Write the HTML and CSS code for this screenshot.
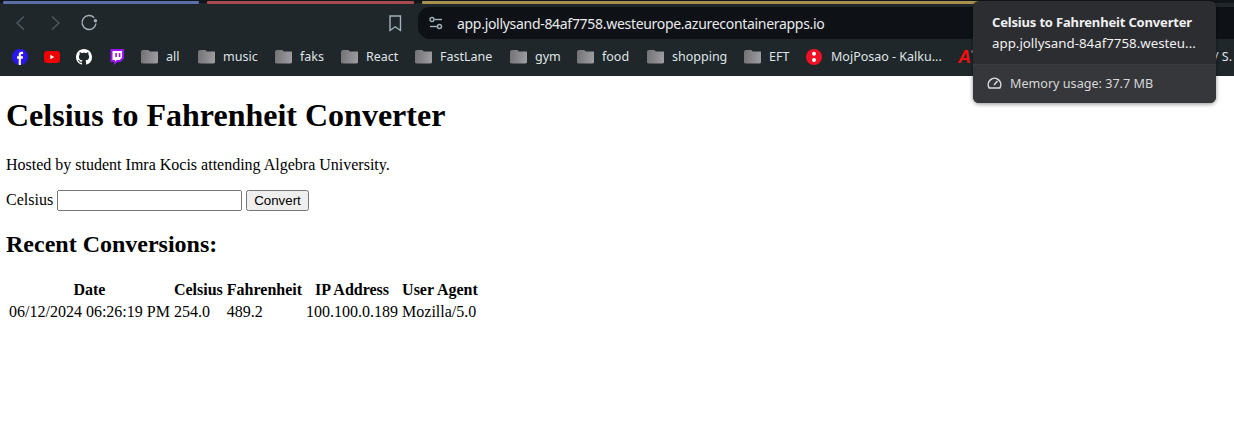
FILE: index.html
```html
<!DOCTYPE html>
<html lang="en">
<head>
    <meta charset="UTF-8">
    <meta name="viewport" content="width=device-width, initial-scale=1.0">
    <title>Celsius to Fahrenheit Converter</title>
    <link rel="stylesheet" href="styles.css">
</head>
<body>
    <div class="browser">
        <div class="tab-strip">
            <div class="tab-line tab-blue"></div>
            <div class="tab-line tab-red"></div>
            <div class="tab-line tab-gold"></div>
        </div>

        <div class="toolbar">
            <button class="tool-btn" aria-label="Back">
                <svg width="16" height="16" viewBox="0 0 16 16"><path d="M11 1.500 4 8l7 6.500" class="stroke-dim"/></svg>
            </button>
            <button class="tool-btn" aria-label="Forward">
                <svg width="16" height="16" viewBox="0 0 16 16"><path d="M5 1.500 12 8l-7 6.500" class="stroke-dim"/></svg>
            </button>
            <button class="tool-btn" aria-label="Reload">
                <svg width="18" height="18" viewBox="0 0 18 18"><path d="M14.200 3.700A7 7 0 1 0 16 9.500" class="stroke-icon"/><circle cx="15.400" cy="6.800" r="1.700" class="fill-icon"/></svg>
            </button>
            <button class="tool-btn tool-bookmark" aria-label="Bookmark">
                <svg width="14" height="17" viewBox="0 0 14 17"><path d="M2 1h10.500v14.500L7.200 11.800 2 15.500z" class="stroke-icon"/></svg>
            </button>
            <div class="address-bar">
                <svg class="tune-icon" width="14" height="14" viewBox="0 0 14 14"><circle cx="3" cy="3.500" r="2" class="stroke-icon"/><path d="M5.500 3.500H13" class="stroke-icon"/><circle cx="10.500" cy="10.500" r="2" class="stroke-icon"/><path d="M1 10.500h7" class="stroke-icon"/></svg>
                <span class="url">app.jollysand-84af7758.westeurope.azurecontainerapps.io</span>
            </div>
        </div>

        <div class="bookmarks">
            <a class="site" aria-label="Facebook">
                <svg width="16" height="16" viewBox="0 0 16 16"><circle cx="8" cy="8" r="8" fill="#2a17f0"/><path d="M6.700 16V9.700H5V7.300h1.700V5.800c0-2 1.100-3 2.900-3 .7 0 1.300.1 1.500.1v2.100h-1c-.9 0-1.200.5-1.200 1.200v1.100h2.200l-.4 2.400H8.900V16z" fill="#fff"/></svg>
            </a>
            <a class="site" aria-label="YouTube">
                <svg width="16" height="12" viewBox="0 0 16 12"><rect width="16" height="12" rx="3" fill="#f00000"/><path d="M6.300 3.800 10.300 6l-4 2.200z" fill="#fff"/></svg>
            </a>
            <a class="site" aria-label="GitHub">
                <svg width="16" height="16" viewBox="0 0 16 16"><path fill="#fff" d="M8 0C3.580 0 0 3.580 0 8c0 3.540 2.290 6.530 5.470 7.590.4.070.55-.17.55-.38 0-.19-.01-.82-.01-1.490-2.010.37-2.530-.49-2.690-.94-.09-.23-.48-.94-.82-1.130-.28-.15-.68-.52-.01-.53.63-.01 1.080.58 1.230.82.72 1.210 1.870.87 2.330.66.070-.52.28-.87.51-1.070-1.780-.2-3.640-.89-3.640-3.950 0-.87.31-1.590.82-2.150-.08-.2-.36-1.020.08-2.120 0 0 .67-.21 2.200.82.64-.18 1.320-.27 2-.27.68 0 1.360.09 2 .27 1.530-1.040 2.200-.82 2.200-.82.44 1.100.16 1.920.08 2.120.51.56.82 1.270.82 2.150 0 3.070-1.870 3.750-3.650 3.950.29.25.54.73.54 1.480 0 1.070-.01 1.930-.01 2.200 0 .21.15.46.55.38A8.013 8.013 0 0016 8c0-4.420-3.580-8-8-8z"/></svg>
            </a>
            <a class="site site-twitch" aria-label="Twitch">
                <svg width="15" height="16" viewBox="0 0 15 16"><path d="M1.500 0H15v9.500L11.500 13H8.500L5 16v-3H1.500z" fill="#9a12f5"/><path d="M3.500 2H13v6.500L10.800 11H7.800L6 12.800V11H3.500z" fill="#fff"/><path d="M6.300 4h1.600v4H6.300zM9.800 4h1.600v4H9.800z" fill="#9a12f5"/></svg>
            </a>

            <a class="folder w-all"><i class="folder-icon"></i>all</a>
            <a class="folder w-music"><i class="folder-icon"></i>music</a>
            <a class="folder w-faks"><i class="folder-icon"></i>faks</a>
            <a class="folder w-react"><i class="folder-icon"></i>React</a>
            <a class="folder w-fastlane"><i class="folder-icon"></i>FastLane</a>
            <a class="folder w-gym"><i class="folder-icon"></i>gym</a>
            <a class="folder w-food"><i class="folder-icon"></i>food</a>
            <a class="folder w-shopping"><i class="folder-icon"></i>shopping</a>
            <a class="folder w-eft"><i class="folder-icon"></i>EFT</a>

            <a class="folder w-moj">
                <svg class="moj-icon" width="16" height="16" viewBox="0 0 16 16"><circle cx="8" cy="8" r="8" fill="#f40f24"/><circle cx="8" cy="4.800" r="2" fill="#fff"/><circle cx="8" cy="11" r="2" fill="#fff"/></svg>
                MojPosao - Kalku...
            </a>
            <a class="a-logo">A</a>
            <a class="last-mark">/ S.</a>
        </div>
    </div>

    <div class="tab-card">
        <div class="card-head">
            <div class="card-title">Celsius to Fahrenheit Converter</div>
            <div class="card-url">app.jollysand-84af7758.westeu...</div>
        </div>
        <div class="card-memory">
            <svg width="15" height="12" viewBox="0 0 15 12"><path d="M2.200 11h10.600a6.300 6.300 0 1 0-10.600 0z" class="stroke-card"/><path d="M7 8 10.500 4" class="stroke-card"/></svg>
            Memory usage: 37.7 MB
        </div>
    </div>

    <div class="page">
        <h1>Celsius to Fahrenheit Converter</h1>
        <p>Hosted by student Imra Kocis attending Algebra University.</p>
        <form>
            <label for="celsius">Celsius</label>
            <input type="text" id="celsius">
            <button type="button">Convert</button>
        </form>
        <h2>Recent Conversions:</h2>
        <table>
            <tr>
                <th>Date</th>
                <th>Celsius</th>
                <th>Fahrenheit</th>
                <th>IP Address</th>
                <th>User Agent</th>
            </tr>
            <tr>
                <td>06/12/2024 06:26:19 PM</td>
                <td>254.0</td>
                <td>489.2</td>
                <td>100.100.0.189</td>
                <td>Mozilla/5.0</td>
            </tr>
        </table>
    </div>
</body>
</html>
```

FILE: styles.css
```css
* {
    box-sizing: border-box;
}

body {
    margin: 0;
    background: white;
    color: black;
    font-family: 'Liberation Serif', serif;
    overflow: hidden;
}

/* browser chrome */
.browser {
    height: 76px;
    background: #1f272b;
    font-family: 'Noto Sans', sans-serif;
    overflow: hidden;
}

.tab-strip {
    display: flex;
    gap: 8px;
    height: 7px;
    padding-left: 3px;
    background: linear-gradient(#11161a 0, #11161a 3px, #1f272b 3px);
}

.tab-line {
    height: 3px;
    margin-top: 1px;
    border-radius: 1px;
}

.tab-blue { width: 196px; background: #5a6ea8; }
.tab-red { width: 207px; background: #a84c50; }
.tab-gold { width: 560px; background: #a8914c; }

.toolbar {
    display: flex;
    align-items: center;
    height: 32px;
    padding-left: 4px;
}

.tool-btn {
    display: flex;
    align-items: center;
    justify-content: center;
    width: 34px;
    height: 32px;
    padding: 0;
    border: none;
    background: none;
}

.tool-bookmark {
    margin-left: auto;
    margin-right: 6px;
}

.stroke-dim { fill: none; stroke: #4e5a60; stroke-width: 1.4; }
.stroke-icon { fill: none; stroke: #a3b1b8; stroke-width: 1.4; }
.fill-icon { fill: #a3b1b8; }
.stroke-card { fill: none; stroke: #dcdddf; stroke-width: 1.5; }

.address-bar {
    display: flex;
    align-items: center;
    width: 816px;
    height: 32px;
    padding-left: 11px;
    background: #0e1216;
    border-radius: 12px 0 0 12px;
}

.tune-icon {
    flex: none;
}

.url {
    margin-left: 14px;
    color: #e8eaeb;
    font-size: 14px;
    letter-spacing: -0.3px;
    white-space: nowrap;
}

.bookmarks {
    display: flex;
    align-items: center;
    height: 37px;
    padding-left: 4px;
    padding-bottom: 2px;
    color: #dfe3e5;
    font-size: 12.5px;
    white-space: nowrap;
}

.site {
    display: flex;
    align-items: center;
    justify-content: center;
    width: 32px;
    height: 20px;
}

.site-twitch {
    margin-right: 9px;
}

.folder {
    display: flex;
    align-items: center;
    flex: none;
}

.folder-icon {
    display: block;
    width: 17px;
    height: 14px;
    margin-right: 8px;
    border-radius: 2px;
    background: linear-gradient(100deg, #727275, #a09fa3);
    clip-path: polygon(0 0, 40% 0, 52% 14%, 100% 14%, 100% 100%, 0 100%);
}

.w-all { width: 57px; }
.w-music { width: 77px; }
.w-faks { width: 66px; }
.w-react { width: 74px; }
.w-fastlane { width: 95px; }
.w-gym { width: 67px; }
.w-food { width: 70px; }
.w-shopping { width: 97px; }
.w-eft { width: 62px; }
.w-moj { width: 152px; }

.moj-icon {
    margin-right: 9px;
}

.a-logo {
    color: #f40f0f;
    font-family: 'Liberation Sans', sans-serif;
    font-size: 18px;
    font-style: italic;
    font-weight: bold;
    line-height: 1;
}

.a-logo::after {
    content: "";
    display: inline-block;
    width: 3px;
    height: 3px;
    margin-bottom: 10px;
    border-radius: 50%;
    background: #70777a;
}

.last-mark {
    margin-left: auto;
    padding-right: 2px;
}

/* tab hover card, sits over the bookmarks and the page */
.tab-card {
    position: absolute;
    top: 1px;
    left: 973px;
    width: 243px;
    height: 102px;
    overflow: hidden;
    border-radius: 6px;
    background: #2c2d30;
    box-shadow: 0 1px 4px rgba(0,0,0,0.45);
    color: #f0f0f1;
    font-family: 'Noto Sans', sans-serif;
}

.card-head {
    height: 64px;
    padding: 11px 0 0 19px;
    border-bottom: 1px solid #3c3d40;
    white-space: nowrap;
}

.card-title {
    font-size: 13px;
    font-weight: 700;
    letter-spacing: -0.17px;
    line-height: 20px;
}

.card-url {
    margin-top: 1px;
    font-size: 13.3px;
    line-height: 20px;
}

.card-memory {
    display: flex;
    align-items: center;
    gap: 8px;
    height: 38px;
    padding: 0 0 2px 14px;
    background: #36373a;
    color: #d6d7d9;
    font-size: 12.6px;
}

/* page content */
.page {
    padding: 0 6px;
}

.page input,
.page button {
    font: 13.333px 'Liberation Sans', sans-serif;
}
```
